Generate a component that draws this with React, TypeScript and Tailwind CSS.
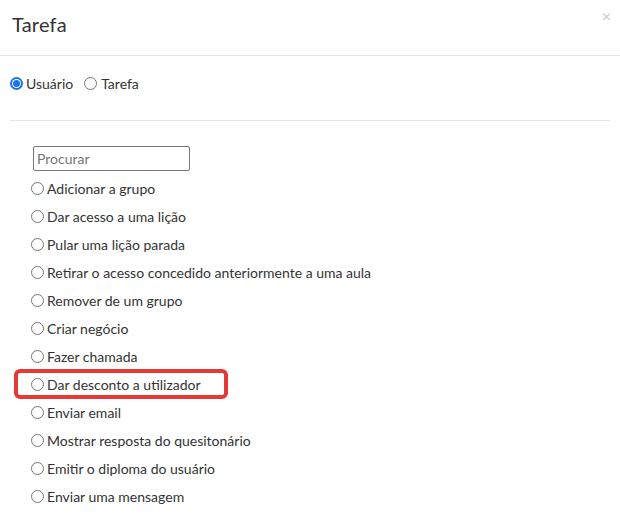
import React from "react";

const items = [
  "Adicionar a grupo",
  "Dar acesso a uma lição",
  "Pular uma lição parada",
  "Retirar o acesso concedido anteriormente a uma aula",
  "Remover de um grupo",
  "Criar negócio",
  "Fazer chamada",
  "Dar desconto a utilizador",
  "Enviar email",
  "Mostrar resposta do quesitonário",
  "Emitir o diploma do usuário",
  "Enviar uma mensagem",
];

function Radio() {
  return <span className="inline-block h-[13px] w-[13px] shrink-0 rounded-full border border-[#767676] bg-white" />;
}

export default function App() {
  return (
    <div className="h-[513px] w-[620px] overflow-hidden bg-white text-[#333333]" style={{ fontFamily: "Lato, 'Open Sans', sans-serif" }}>
      <div className="relative flex h-[56px] items-start border-b border-[#e5e5e5] px-[12px] pt-[10px]">
        <h1 className="text-[20px] leading-[28px] tracking-[0.2px] text-[#333]">Tarefa</h1>
        <span className="absolute right-[9px] top-[6px] text-[16px] leading-[20px] text-[#c8c8c8]">×</span>
      </div>
      <div className="flex h-[62px] items-center px-[10px] pb-[8px] text-[14px]">
        <label className="flex items-center">
          <span className="inline-flex h-[13px] w-[13px] items-center justify-center rounded-full bg-[#1a73e8]">
            <span className="inline-flex h-[9px] w-[9px] items-center justify-center rounded-full bg-white">
              <span className="h-[7px] w-[7px] rounded-full bg-[#1a73e8]" />
            </span>
          </span>
          <span className="ml-[3px]">Usuário</span>
        </label>
        <label className="ml-[11px] flex items-center gap-[4px]">
          <Radio />
          <span>Tarefa</span>
        </label>
      </div>
      <div className="mx-[10px] mt-[2px] border-t border-[#e5e5e5]" />
      <div className="pl-[31px] pt-[25px] text-[14px]">
        <div className="mb-[3px] pl-[2px]">
          <div className="flex h-[25px] w-[157px] items-center rounded-[2px] border border-[#767676] px-[3px] text-[14px] text-[#757575]">
            Procurar
          </div>
        </div>
        {items.map((t, i) => (
          <div key={i} className="relative flex h-[28px] items-center gap-[3px]">
            <Radio />
            <span>{t}</span>
            {i === 7 && (
              <span className="pointer-events-none absolute left-[-17px] top-[-1px] h-[30px] w-[214px] rounded-[6px] border-[4px] border-[#e53935]" />
            )}
          </div>
        ))}
      </div>
    </div>
  );
}
